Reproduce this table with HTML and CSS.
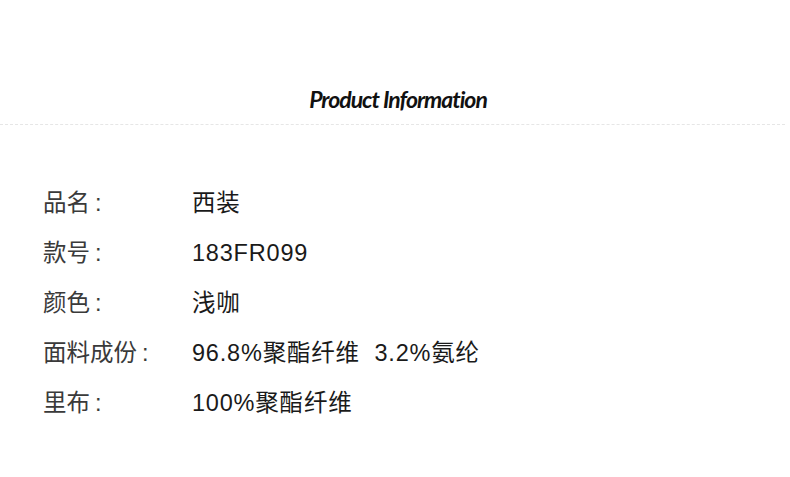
FILE: index.html
```html
<!DOCTYPE html>
<html lang="zh">
<head>
<meta charset="utf-8">
<link rel="stylesheet" href="styles.css">
</head>
<body>
<div class="page">
  <header class="head">
    <h1 class="title">Product Information</h1>
  </header>
  <div class="rule"></div>
  <dl class="info">
    <div class="row"><dt>品名<span class="colon">:</span></dt><dd>西装</dd></div>
    <div class="row"><dt>款号<span class="colon">:</span></dt><dd>183FR099</dd></div>
    <div class="row"><dt>颜色<span class="colon">:</span></dt><dd>浅咖</dd></div>
    <div class="row"><dt>面料成份<span class="colon">:</span></dt><dd>96.8%聚酯纤维&nbsp;&nbsp;3.2%氨纶</dd></div>
    <div class="row"><dt>里布<span class="colon">:</span></dt><dd>100%聚酯纤维</dd></div>
  </dl>
</div>
</body>
</html>
```
FILE: styles.css
```css
* { box-sizing: border-box; }
html, body { margin: 0; padding: 0; background: #fff; }
.page { width: 790px; height: 477px; }
.head { height: 124px; display: flex; justify-content: center; align-items: flex-end; padding-bottom: 11px; padding-left: 6px; }
.title {
  margin: 0;
  font-family: "Lato", sans-serif;
  font-style: italic;
  font-weight: 700;
  font-size: 23px;
  letter-spacing: -1px;
  color: #111;
  line-height: 28px;
}
.rule { width: 785px; border-top: 1px dashed #e6e6e6; }
.info { margin: 63px 0 0 0; padding: 0 0 0 43px; }
.row { display: flex; height: 50px; align-items: flex-start; }
dt, dd {
  margin: 0;
  font-family: "Liberation Sans", "Noto Sans CJK SC", sans-serif;
  font-size: 23.5px;
  line-height: 30px;
}
dt { width: 149px; color: #3a3a3a; }
.colon { margin-left: 5px; }
dd { color: #1a1a1a; letter-spacing: 0.8px; }
```
